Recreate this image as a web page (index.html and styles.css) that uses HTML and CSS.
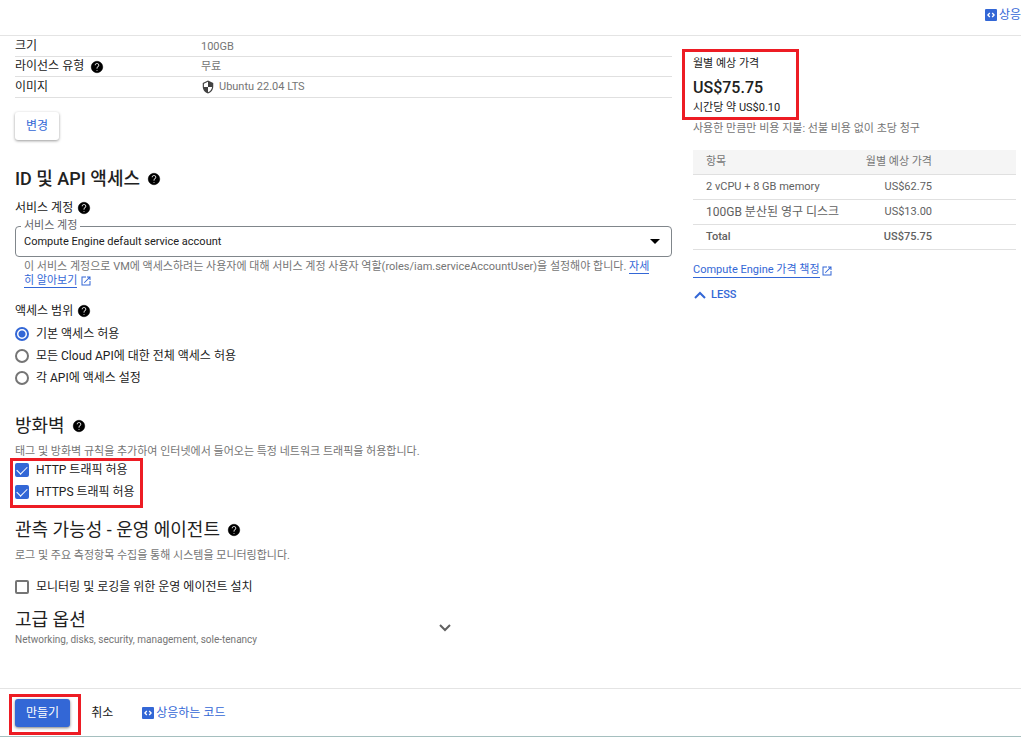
FILE: index.html
```html
<!DOCTYPE html>
<html lang="ko">
<head>
<meta charset="utf-8">
<title>인스턴스 만들기</title>
<link rel="stylesheet" href="styles.css">
</head>
<body>
<svg class="defs" aria-hidden="true">
  <symbol id="help" viewBox="0 0 24 24"><path d="M12 2C6.48 2 2 6.48 2 12s4.48 10 10 10 10-4.48 10-10S17.52 2 12 2zm1 17h-2v-2h2v2zm2.07-7.75l-.9.92C13.45 12.9 13 13.5 13 15h-2v-.5c0-1.1.45-2.1 1.17-2.83l1.24-1.26c.37-.36.59-.86.59-1.41 0-1.1-.9-2-2-2s-2 .9-2 2H8c0-2.21 1.79-4 4-4s4 1.79 4 4c0 .88-.36 1.68-.93 2.25z" fill="currentColor" stroke="currentColor" stroke-width=".6"/></symbol>
  <symbol id="open" viewBox="0 0 24 24"><path d="M19 19H5V5h7V3H3v18h18v-9h-2v7zM14 3v2h3.59l-9.83 9.83 1.41 1.41L19 6.41V10h2V3h-7z" fill="currentColor"/></symbol>
  <symbol id="code" viewBox="0 0 12 12"><rect width="12" height="12" rx="1" fill="#3367d6"/><path d="M4.8 4L2.9 6l1.9 2M7.2 4l1.9 2-1.9 2" fill="none" stroke="#fff" stroke-width="1.3"/></symbol>
</svg>
<div class="page">
  <header class="topbar">
    <a class="code-link" href="#"><svg class="icon-code"><use href="#code"/></svg>상응</a>
  </header>
  <div class="columns">
    <main class="main">
      <table class="specs">
        <tr><th scope="row">크기</th><td>100GB</td></tr>
        <tr><th scope="row"><span class="with-icon wide">라이선스 유형 <svg class="icon-help"><use href="#help"/></svg></span></th><td>무료</td></tr>
        <tr><th scope="row">이미지</th><td><span class="with-icon os"><svg class="icon-shield" viewBox="0 0 24 24"><path d="M12 1L3 5v6c0 5.55 3.84 10.74 9 12 5.16-1.26 9-6.45 9-12V5l-9-4zm0 10.99h7c-.53 4.12-3.28 7.79-7 8.94V12H5V6.3l7-3.11v8.8z" fill="currentColor"/></svg>Ubuntu 22.04 LTS</span></td></tr>
      </table>
      <button class="change" type="button">변경</button>

      <section class="access">
        <h2>ID 및 API 액세스 <svg class="icon-help"><use href="#help"/></svg></h2>
        <h3>서비스 계정 <svg class="icon-help"><use href="#help"/></svg></h3>
        <div class="field">
          <label for="account">서비스 계정</label>
          <select id="account"><option>Compute Engine default service account</option></select>
          <svg class="arrow" viewBox="0 0 10 5"><path d="M0 0h10L5 5z"/></svg>
        </div>
        <p class="helper">이 서비스 계정으로 VM에 액세스하려는 사용자에 대해 서비스 계정 사용자 역할(roles/iam.serviceAccountUser)을 설정해야 합니다. <a href="#">자세<br>히 알아보기</a> <svg class="icon-open"><use href="#open"/></svg></p>
        <h3>액세스 범위 <svg class="icon-help"><use href="#help"/></svg></h3>
        <div class="choices">
          <label><input type="radio" name="scope" checked>기본 액세스 허용</label>
          <label><input type="radio" name="scope">모든 Cloud API에 대한 전체 액세스 허용</label>
          <label><input type="radio" name="scope">각 API에 액세스 설정</label>
        </div>
      </section>

      <section class="firewall">
        <h2>방화벽 <svg class="icon-help"><use href="#help"/></svg></h2>
        <p class="note">태그 및 방화벽 규칙을 추가하여 인터넷에서 들어오는 특정 네트워크 트래픽을 허용합니다.</p>
        <div class="choices marked mark-traffic">
          <label><input type="checkbox" checked>HTTP 트래픽 허용</label>
          <label><input type="checkbox" checked>HTTPS 트래픽 허용</label>
        </div>
      </section>

      <section class="agent">
        <h2>관측 가능성 - 운영 에이전트 <svg class="icon-help"><use href="#help"/></svg></h2>
        <p class="note">로그 및 주요 측정항목 수집을 통해 시스템을 모니터링합니다.</p>
        <div class="choices">
          <label><input type="checkbox">모니터링 및 로깅을 위한 운영 에이전트 설치</label>
        </div>
      </section>

      <button class="advanced" type="button">
        <span><span class="advanced-title">고급 옵션</span><span class="advanced-note">Networking, disks, security, management, sole-tenancy</span></span>
        <svg class="chevron" viewBox="0 0 12 8"><path d="M1 1l5 5 5-5"/></svg>
      </button>
    </main>

    <aside class="price">
      <div class="summary marked mark-price">
        <div class="price-label">월별 예상 가격</div>
        <div class="price-total">US$75.75</div>
        <div class="price-hour">시간당 약 US$0.10</div>
      </div>
      <p class="note pay">사용한 만큼만 비용 지불: 선불 비용 없이 초당 청구</p>
      <table class="costs">
        <thead><tr><th>항목</th><th>월별 예상 가격</th></tr></thead>
        <tbody>
          <tr><td>2 vCPU + 8 GB memory</td><td>US$62.75</td></tr>
          <tr><td class="disk">100GB 분산된 영구 디스크</td><td>US$13.00</td></tr>
          <tr class="total"><td>Total</td><td>US$75.75</td></tr>
        </tbody>
      </table>
      <div class="pricing-link"><a href="#">Compute Engine 가격 책정</a><svg class="icon-open"><use href="#open"/></svg></div>
      <button class="less" type="button"><svg class="chevron" viewBox="0 0 12 8"><path d="M1 7l5-5 5 5"/></svg>LESS</button>
    </aside>
  </div>
  <footer class="footer">
    <div class="marked mark-create"><button class="create" type="button">만들기</button></div>
    <button class="cancel" type="button">취소</button>
    <a class="code-link" href="#"><svg class="icon-code"><use href="#code"/></svg>상응하는 코드</a>
  </footer>
</div>
</body>
</html>
```
FILE: styles.css
```css
* { box-sizing: border-box; }
body {
  margin: 0;
  background: #fff;
  color: #212121;
  font: 12px/20px Roboto, "Noto Sans CJK KR", sans-serif;
  overflow-x: hidden;
}
h2, h3, p { margin: 0; font-weight: 400; }
button { font: inherit; border: 0; background: none; padding: 0; cursor: pointer; }
a { color: #3367d6; text-decoration: none; }
svg { flex: none; }
.defs { position: absolute; width: 0; height: 0; }
.page { display: flex; flex-direction: column; min-height: 100vh; }

.topbar {
  display: flex;
  justify-content: flex-end;
  height: 36px;
  padding-top: 5px;
  border-bottom: 1px solid #e4e4e4;
}
.code-link { display: flex; align-items: center; gap: 2px; height: 20px; white-space: nowrap; }
.icon-code { width: 12px; height: 12px; }
.icon-help { width: 14px; height: 14px; color: #000; }
.icon-open { width: 12px; height: 12px; color: #3367d6; }

.columns {
  display: grid;
  grid-template-columns: minmax(0, 1fr) 323px;
  gap: 21px;
  padding: 0 5px 0 15px;
  flex: 1;
}

.specs { width: 100%; padding-top: 1px; border-collapse: separate; border-spacing: 0; }
.specs th, .specs td { padding: 0; line-height: 19px; text-align: left; font-weight: 400; border-bottom: 1px solid #e0e0e0; }
.specs tr:last-child > * { line-height: 20px; }
.specs th { width: 186px; }
.specs td { color: #757575; font-size: 11px; }
.with-icon { display: flex; align-items: center; gap: 4px; }
.wide { gap: 6px; }
.icon-shield { width: 14px; height: 14px; color: #424242; }
.change {
  height: 28px;
  padding: 0 11px;
  margin-top: 14px;
  border-radius: 3px;
  color: #3367d6;
  box-shadow: 0 1px 3px rgba(0, 0, 0, .4);
}

h2 { display: flex; align-items: center; gap: 7px; font-size: 18px; line-height: 24px; }
.access h2 { font-weight: 500; }
h3 { display: flex; align-items: center; gap: 4px; font-size: 12px; line-height: 20px; }
.access { padding-top: 27px; }
.access h2 { margin-bottom: 7px; }
.field { position: relative; margin-top: 8px; }
.field label {
  position: absolute;
  left: 6px;
  top: -7px;
  padding: 0 3px;
  background: #fff;
  color: #5f6368;
  font-size: 11px;
  line-height: 14px;
}
.field select {
  display: block;
  width: 100%;
  height: 31px;
  padding: 0 8px;
  border: 1px solid #80868b;
  border-radius: 4px;
  background: #fff;
  color: #212121;
  font: inherit;
  font-size: 11px;
  appearance: none;
}
.arrow { position: absolute; right: 12px; top: 13px; width: 10px; height: 5px; }
.helper { padding: 3px 10px 0 9px; color: #757575; font-size: 11px; line-height: 14px; }
.helper a { border-bottom: 1px solid #3367d6; }
.helper .icon-open { vertical-align: middle; }
.helper + h3 { margin-top: 13px; }

.choices { display: flex; flex-direction: column; align-items: flex-start; }
.choices label { display: flex; align-items: center; gap: 7px; height: 22px; }
.choices input {
  appearance: none;
  width: 14px;
  height: 14px;
  margin: 0;
  border: 2px solid #757575;
  border-radius: 2px;
}
.choices input[type="radio"] { border-radius: 50%; }
.choices input[type="radio"]:checked { border-color: #3367d6; background: radial-gradient(circle, #3367d6 3px, #fff 4px); }
.choices input[type="checkbox"]:checked {
  display: grid;
  place-items: center;
  border-color: #3367d6;
  background: #3367d6;
}
.choices input[type="checkbox"]:checked::before {
  content: "";
  width: 9px;
  height: 5px;
  border: solid #fff;
  border-width: 0 0 1px 1px;
  transform: translateY(-1px) rotate(-45deg);
}
.access .choices { padding-top: 2px; }
.note { color: #757575; font-size: 11px; line-height: 16px; }
.firewall { padding-top: 25px; }
.firewall .note { padding-top: 6px; }
.firewall .choices { margin-top: -1px; }
.agent { padding-top: 15px; }
.agent .note { padding-top: 6px; }
.agent .choices { padding-top: 12px; }

.advanced {
  display: flex;
  align-items: center;
  justify-content: space-between;
  width: 436px;
  margin-top: 10px;
  text-align: left;
  color: #212121;
}
.advanced-title { display: block; font-size: 18px; line-height: 24px; }
.advanced-note { display: block; color: #757575; font-size: 10px; line-height: 16px; }
.chevron { width: 12px; height: 8px; fill: none; stroke: #616161; stroke-width: 2; }

/* Highlight frames drawn over the regions of interest */
.marked { position: relative; }
.marked::after { content: ""; position: absolute; border: 3px solid #ed1c24; pointer-events: none; }
.mark-traffic { width: 127px; }
.mark-traffic::after { inset: -1px -1px -5px -5px; }
.mark-price { width: 106px; }
.mark-price::after { inset: -6px 0 -4px -11px; }
.mark-create::after { inset: -5px -11px -8px -6px; }

.price { padding-top: 19px; }
.price-label { font-size: 11px; line-height: 18px; }
.price-total { font-size: 16px; line-height: 30px; font-weight: 500; }
.summary { height: 61px; }
.price-hour { line-height: 10px; font-size: 11px; white-space: nowrap; }
.pay { padding-top: 5px; }
.costs { width: 100%; margin-top: 13px; border-collapse: separate; border-spacing: 0; color: #616161; font-size: 11px; }
.costs th, .costs td { height: 25px; padding: 0; line-height: 20px; font-weight: 400; text-align: left; border-bottom: 1px solid #e0e0e0; }
.costs th { background: #f5f5f5; color: #757575; }
.costs th:first-child, .costs td:first-child { padding-left: 13px; }
.costs th:last-child, .costs td:last-child { padding-right: 84px; text-align: right; }
.costs .disk { font-size: 12px; }
.costs .total td { font-weight: 500; }
.pricing-link { display: flex; align-items: center; gap: 1px; margin-top: 13px; font-size: 11px; line-height: 14px; }
.pricing-link a { border-bottom: 1px solid #3367d6; }
.less { display: flex; align-items: center; gap: 5px; margin-top: 7px; padding-left: 1px; color: #3367d6; font-size: 11px; line-height: 20px; font-weight: 500; }
.less .chevron { stroke: #3367d6; }

.footer {
  display: flex;
  align-items: flex-start;
  height: 49px;
  padding: 10px 15px 0;
  border-top: 1px solid #e4e4e4;
  border-bottom: 1px solid #a5bfbf;
}
.create {
  height: 28px;
  padding: 0 11px;
  border-radius: 3px;
  background: #3367d6;
  color: #fff;
  box-shadow: 0 1px 3px rgba(0, 0, 0, .5);
}
.cancel { height: 28px; margin: 0 29px 0 21px; color: #212121; }
.footer .code-link { height: 28px; }
```
